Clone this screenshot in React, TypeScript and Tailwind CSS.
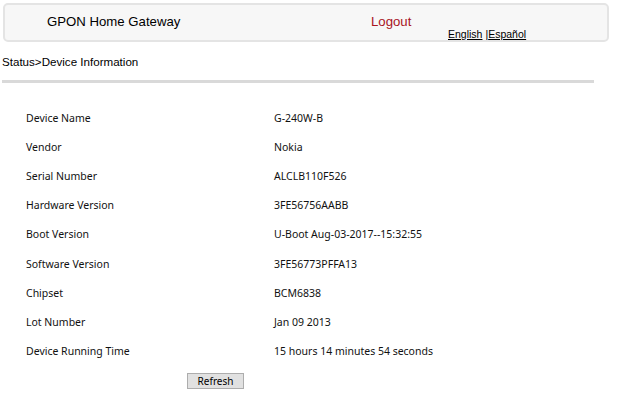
export default function App() {
  const rows: [string, string][] = [
    ["Device Name", "G-240W-B"],
    ["Vendor", "Nokia"],
    ["Serial Number", "ALCLB110F526"],
    ["Hardware Version", "3FE56756AABB"],
    ["Boot Version", "U-Boot Aug-03-2017--15:32:55"],
    ["Software Version", "3FE56773PFFA13"],
    ["Chipset", "BCM6838"],
    ["Lot Number", "Jan 09 2013"],
    ["Device Running Time", "15 hours 14 minutes 54 seconds"],
  ];
  return (
    <div className="w-[640px] h-[400px] bg-white overflow-hidden text-black" style={{ fontFamily: '"Liberation Sans", Arial, sans-serif' }}>
      <div className="ml-[3px] mt-[3px] w-[606px] h-[39px] rounded-[5px] border-2 border-[#e4e4e4] bg-[#f7f7f7] flex items-start">
        <div className="ml-[42px] mt-[8px] text-[13.2px] leading-[18px] w-[324px]">GPON Home Gateway</div>
        <div className="mt-[8px] text-[13.2px] leading-[18px] text-[#a8141e] w-[77px]">Logout</div>
        <div className="mt-[22px] text-[10.5px] leading-[14px] flex">
          <a className="underline text-black">English</a>
          <span className="ml-[3px]">|</span>
          <a className="underline text-black">Español</a>
        </div>
      </div>
      <div className="ml-[2px] mt-[12px] text-[11.6px] leading-[15px]">Status&gt;Device Information</div>
      <div className="ml-[2px] mt-[11px] w-[592px] h-[3px] bg-[#d9d9d9]" />
      <div className="mt-[21px] ml-[26px]" style={{ fontFamily: '"Noto Sans", sans-serif' }}>
        {rows.map(([k, v]) => (
          <div key={k} className="flex h-[29.2px] items-center text-[10.5px] text-[#111]">
            <div className="w-[248px]">{k}</div>
            <div>{v}</div>
          </div>
        ))}
      </div>
      <div className="ml-[187px] mt-[1px]">
        <button className="w-[57px] h-[16px] bg-[#e1e1e1] border border-[#adadad] text-[10px] leading-[14px] text-black" style={{ fontFamily: '"Noto Sans", sans-serif' }}>
          Refresh
        </button>
      </div>
    </div>
  );
}
